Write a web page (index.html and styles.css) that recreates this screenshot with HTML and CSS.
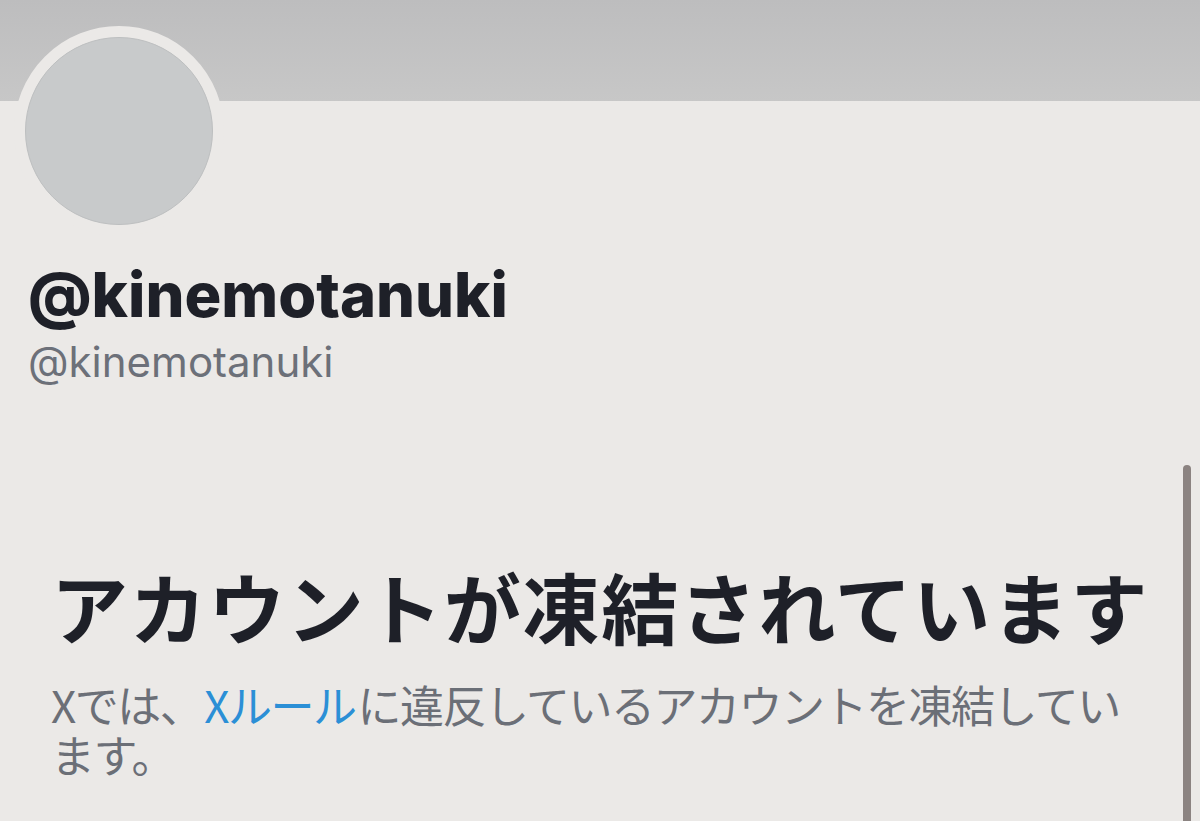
FILE: index.html
```html
<!DOCTYPE html>
<html lang="ja">
<head>
<meta charset="utf-8">
<title>@kinemotanuki</title>
<link rel="stylesheet" href="styles.css">
</head>
<body>
<div class="page">
  <div class="banner"></div>
  <div class="profile">
    <div class="avatar-ring"><div class="avatar"></div></div>
    <div class="names">
      <div class="display-name">@kinemotanuki</div>
      <div class="handle">@kinemotanuki</div>
    </div>
  </div>
  <div class="notice">
    <h1 class="notice-title">アカウントが凍結されています</h1>
    <p class="notice-text">Xでは、<a class="link" href="#">Xルール</a>に違反しているアカウントを凍結しています。</p>
  </div>
  <div class="scrollbar"></div>
</div>
</body>
</html>
```
FILE: styles.css
```css
html, body {
  margin: 0;
  padding: 0;
}
body {
  background: #ebe9e7;
  width: 1200px;
  height: 821px;
  overflow: hidden;
  font-family: Inter, "Noto Sans CJK JP", sans-serif;
}
.page {
  position: relative;
  height: 821px;
}
.banner {
  height: 101px;
  background: linear-gradient(180deg, #bdbdbe 0%, #c7c7c7 100%);
}
.profile {
  padding-left: 14px;
}
.avatar-ring {
  width: 188px;
  height: 188px;
  margin-top: -75px;
  border: 11px solid #ebe9e7;
  border-radius: 50%;
  background: #ebe9e7;
}
.avatar {
  box-sizing: border-box;
  width: 188px;
  height: 188px;
  border-radius: 50%;
  background: #c8cacb;
  border: 1px solid #bdbfc0;
}
.names {
  padding-left: 14px;
  margin-top: 23px;
}
.display-name {
  font-family: Inter, sans-serif;
  font-weight: 800;
  font-size: 61.4px;
  line-height: 72px;
  color: #1e2028;
  letter-spacing: 0;
}
.handle {
  font-family: Inter, sans-serif;
  font-weight: 400;
  font-size: 42px;
  line-height: 52px;
  color: #6c7079;
  margin-top: 5px;
}
.notice {
  padding: 0 40px 0 51px;
  margin-top: 168px;
}
.notice-title {
  margin: 0;
  font-family: "Noto Sans CJK JP", sans-serif;
  font-weight: 700;
  font-size: 77px;
  line-height: 100px;
  color: #1e2028;
  letter-spacing: 1.6px;
  white-space: nowrap;
}
.notice-text {
  margin: 23px 0 0;
  padding-right: 14px;
  font-family: "Noto Sans CJK JP", sans-serif;
  font-weight: 400;
  font-size: 44px;
  line-height: 50px;
  color: #6b6f77;
  letter-spacing: -1.5px;
}
.link {
  color: #2b8fd6;
  text-decoration: none;
  margin: 0 2px;
}
.scrollbar {
  position: absolute;
  right: 9px;
  top: 465px;
  bottom: -10px;
  width: 8px;
  border-radius: 4px;
  background: #8b8381;
}
```
